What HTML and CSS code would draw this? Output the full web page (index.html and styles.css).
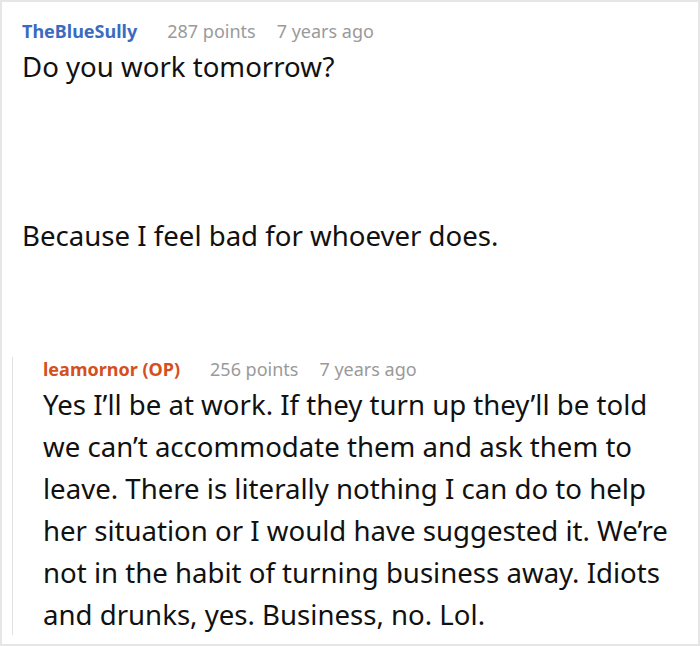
FILE: index.html
```html
<!DOCTYPE html>
<html>
<head>
<meta charset="utf-8">
<link rel="stylesheet" href="styles.css">
</head>
<body>
<div class="frame">
  <div class="comment">
    <div class="meta">
      <span class="author blue">TheBlueSully</span>
      <span class="info points">287 points</span>
      <span class="info">7 years ago</span>
    </div>
    <div class="body top-body">
      <p>Do you work tomorrow?</p>
      <p class="second">Because I feel bad for whoever does.</p>
    </div>
  </div>
  <div class="reply">
    <div class="meta">
      <span class="author op">leamornor (OP)</span>
      <span class="info points">256 points</span>
      <span class="info">7 years ago</span>
    </div>
    <div class="body reply-body">
      <p>Yes I’ll be at work. If they turn up they’ll be told we can’t accommodate them and ask them to leave. There is literally nothing I can do to help her situation or I would have suggested it. We’re not in the habit of turning business away. Idiots and drunks, yes. Business, no. Lol.</p>
    </div>
  </div>
</div>
</body>
</html>
```
FILE: styles.css
```css
html, body {
  margin: 0;
  padding: 0;
  background: #fff;
}
body {
  font-family: "Noto Sans", "Open Sans", sans-serif;
  color: #111;
}
.frame {
  box-sizing: border-box;
  width: 700px;
  height: 646px;
  border: 2px solid #e6e6e6;
  padding: 17px 20px 0 20px;
  overflow: hidden;
}
.meta {
  display: flex;
  align-items: baseline;
  font-size: 18px;
  line-height: 24px;
  white-space: nowrap;
}
.meta .points {
  margin-left: 30px;
}
.meta .points + .info {
  margin-left: 21px;
}
.info {
  color: #9a9a9a;
}
.author {
  font-weight: 700;
}
.blue { color: #3b6bbf; }
.op { color: #d4501d; }
.body p {
  margin: 0;
}
.top-body {
  font-size: 27.6px;
  line-height: 38px;
  margin-top: 4px;
}
.top-body .second {
  margin-top: 131px;
}
.reply {
  margin-top: 112px;
  margin-left: -10px;
  border-left: 1px solid #e2e2e2;
  padding-left: 30px;
  padding-right: 10px;
}
.reply .meta {
  margin-top: -9px;
}
.reply-body {
  font-size: 27.6px;
  line-height: 42px;
  margin-top: 2px;
  margin-bottom: -9px;
}
```
